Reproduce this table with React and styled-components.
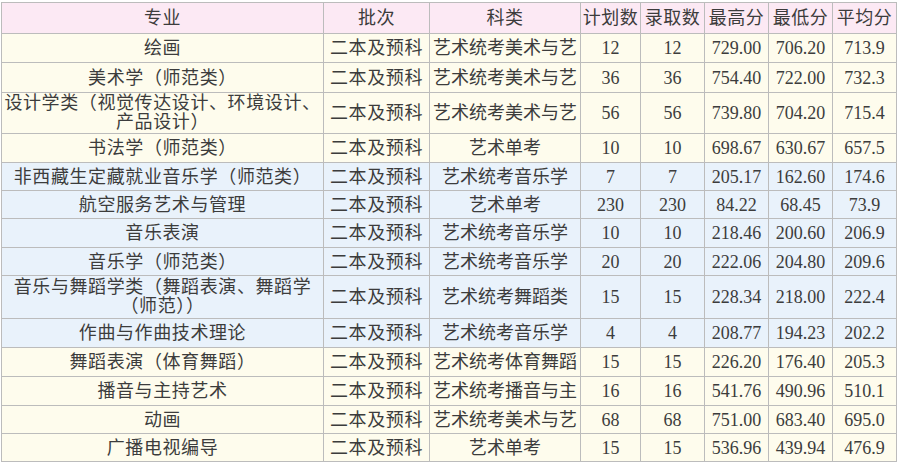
import React from 'react';
import styled, { createGlobalStyle } from 'styled-components';

const GlobalStyle = createGlobalStyle`
  body {
    margin: 0;
    background: #ffffff;
    font-family: "Liberation Serif", "Noto Sans CJK SC", serif;
  }
`;

const Page = styled.div`
  padding: 2px 3px 0 1px;
`;

const Table = styled.table`
  border-collapse: collapse;
  table-layout: fixed;
  width: 895px;
  color: #3c3c3c;
  font-size: 18px;
`;

const tones = {
  head: '#fce9f4',
  warm: '#fefced',
  cool: '#e9f2fb',
};

const Row = styled.tr`
  background: ${props => tones[props.tone]};
  height: ${props => props.h}px;
`;

const Cell = styled.td`
  border: 1px solid #bcbcbc;
  padding: 0;
  text-align: center;
  vertical-align: middle;
  white-space: nowrap;
  overflow: hidden;
  line-height: 20px;
  letter-spacing: ${props => (props.cjk ? '0.6px' : '0')};
`;

const HeadCell = styled(Cell).attrs({ as: 'th' })`
  font-weight: normal;
  letter-spacing: 0.5px;
`;

const Line = styled.span`
  display: block;
  line-height: 19px;
`;

const widths = [322, 106, 151, 60, 64, 64, 64, 64];
const headers = ['专业', '批次', '科类', '计划数', '录取数', '最高分', '最低分', '平均分'];

const ART = '艺术统考美术与艺';
const MUSIC = '艺术统考音乐学';
const SOLO = '艺术单考';
const BATCH = '二本及预科';

const rows = [
  { tone: 'warm', h: 29, name: '绘画', kind: ART, n: ['12', '12', '729.00', '706.20', '713.9'] },
  { tone: 'warm', h: 30, name: '美术学（师范类）', kind: ART, n: ['36', '36', '754.40', '722.00', '732.3'] },
  { tone: 'warm', h: 41, name: ['设计学类（视觉传达设计、环境设计、', '产品设计）'], kind: ART, n: ['56', '56', '739.80', '704.20', '715.4'] },
  { tone: 'warm', h: 29, name: '书法学（师范类）', kind: SOLO, n: ['10', '10', '698.67', '630.67', '657.5'] },
  { tone: 'cool', h: 28, name: '非西藏生定藏就业音乐学（师范类）', kind: MUSIC, n: ['7', '7', '205.17', '162.60', '174.6'] },
  { tone: 'cool', h: 28, name: '航空服务艺术与管理', kind: SOLO, n: ['230', '230', '84.22', '68.45', '73.9'] },
  { tone: 'cool', h: 29, name: '音乐表演', kind: MUSIC, n: ['10', '10', '218.46', '200.60', '206.9'] },
  { tone: 'cool', h: 28, name: '音乐学（师范类）', kind: MUSIC, n: ['20', '20', '222.06', '204.80', '209.6'] },
  { tone: 'cool', h: 43, name: ['音乐与舞蹈学类（舞蹈表演、舞蹈学', '（师范））'], kind: '艺术统考舞蹈类', n: ['15', '15', '228.34', '218.00', '222.4'] },
  { tone: 'cool', h: 29, name: '作曲与作曲技术理论', kind: MUSIC, n: ['4', '4', '208.77', '194.23', '202.2'] },
  { tone: 'warm', h: 29, name: '舞蹈表演（体育舞蹈）', kind: '艺术统考体育舞蹈', n: ['15', '15', '226.20', '176.40', '205.3'] },
  { tone: 'warm', h: 29, name: '播音与主持艺术', kind: '艺术统考播音与主', n: ['16', '16', '541.76', '490.96', '510.1'] },
  { tone: 'warm', h: 28, name: '动画', kind: ART, n: ['68', '68', '751.00', '683.40', '695.0'] },
  { tone: 'warm', h: 28, name: '广播电视编导', kind: SOLO, n: ['15', '15', '536.96', '439.94', '476.9'] },
];

const Name = ({ value }) =>
  Array.isArray(value)
    ? value.map((line, i) => <Line key={i}>{line}</Line>)
    : value;

export default function App() {
  return (
    <Page>
      <GlobalStyle />
      <Table>
        <colgroup>
          {widths.map((w, i) => (
            <col key={i} style={{ width: w }} />
          ))}
        </colgroup>
        <thead>
          <Row tone="head" h={31}>
            {headers.map(h => (
              <HeadCell key={h}>{h}</HeadCell>
            ))}
          </Row>
        </thead>
        <tbody>
          {rows.map((r, i) => (
            <Row key={i} tone={r.tone} h={r.h}>
              <Cell cjk>
                <Name value={r.name} />
              </Cell>
              <Cell cjk>{BATCH}</Cell>
              <Cell>{r.kind}</Cell>
              {r.n.map((v, j) => (
                <Cell key={j}>{v}</Cell>
              ))}
            </Row>
          ))}
        </tbody>
      </Table>
    </Page>
  );
}
